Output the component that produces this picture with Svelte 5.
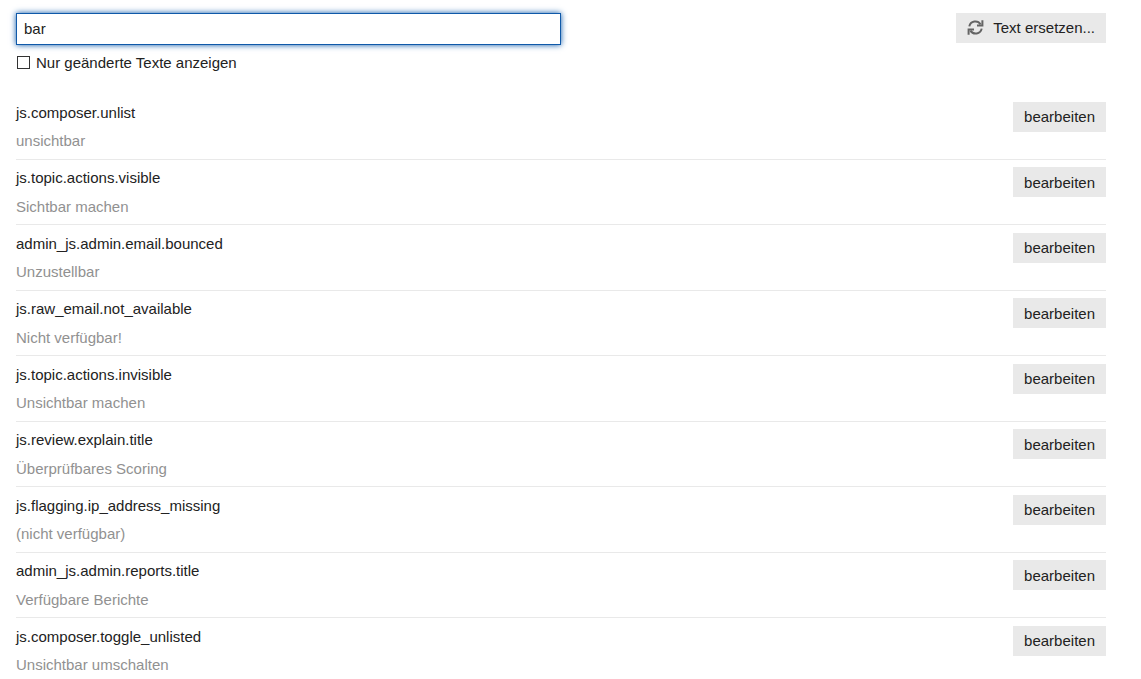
<script lang="ts">
	interface SiteText {
		id: string;
		value: string;
	}

	const texts: SiteText[] = [
		{ id: 'js.composer.unlist', value: 'unsichtbar' },
		{ id: 'js.topic.actions.visible', value: 'Sichtbar machen' },
		{ id: 'admin_js.admin.email.bounced', value: 'Unzustellbar' },
		{ id: 'js.raw_email.not_available', value: 'Nicht verfügbar!' },
		{ id: 'js.topic.actions.invisible', value: 'Unsichtbar machen' },
		{ id: 'js.review.explain.title', value: 'Überprüfbares Scoring' },
		{ id: 'js.flagging.ip_address_missing', value: '(nicht verfügbar)' },
		{ id: 'admin_js.admin.reports.title', value: 'Verfügbare Berichte' },
		{ id: 'js.composer.toggle_unlisted', value: 'Unsichtbar umschalten' }
	];

	let query = $state('bar');
	let onlyOverridden = $state(false);
</script>

<main>
	<div class="search">
		<input class="query" type="text" aria-label="Suche" bind:value={query} />
		<button class="btn" type="button">
			<svg viewBox="0 0 16 16" width="16" height="16" aria-hidden="true">
				<path d="M2.3 7.4A6.2 6.2 0 0 1 13.6 5.4M14.7 9.6A6.2 6.2 0 0 1 3.4 11.6" />
				<path d="M15.4 1.2V6.5H10M1.6 15.8V10.5H7" />
			</svg>
			Text ersetzen...
		</button>
	</div>

	<label class="filter">
		<input type="checkbox" bind:checked={onlyOverridden} />
		Nur geänderte Texte anzeigen
	</label>

	<ul>
		{#each texts as text (text.id)}
			<li>
				<div class="text">
					<h3>{text.id}</h3>
					<p>{text.value}</p>
				</div>
				<button class="btn" type="button">bearbeiten</button>
			</li>
		{/each}
	</ul>
</main>

<style>
	:global(body) {
		background: #fff;
		overflow: hidden;
	}

	main {
		padding: 13px 35px 0 16px;
		font-family: Arial, 'Liberation Sans', sans-serif;
		font-size: 15px;
		line-height: 21px;
		color: #222;
	}

	.search {
		display: flex;
		align-items: flex-start;
		justify-content: space-between;
	}

	.query {
		box-sizing: border-box;
		width: 50%;
		height: 32px;
		padding: 0 7px 2px;
		border: 1px solid #0f59a9;
		border-radius: 0;
		outline: none;
		background: #fff;
		box-shadow: 0 0 6px #0f59a9;
		font: inherit;
		color: inherit;
	}

	.btn {
		display: inline-flex;
		flex: none;
		align-items: center;
		height: 30px;
		padding: 0 11px 2px;
		border: none;
		background: #e9e9e9;
		font: inherit;
		color: inherit;
		cursor: pointer;
	}

	.btn svg {
		margin-right: 10px;
		overflow: visible;
		fill: none;
		stroke: #646464;
		stroke-width: 2;
	}

	.filter {
		display: flex;
		align-items: center;
		gap: 6px;
		width: fit-content;
		margin-top: 7px;
	}

	.filter input {
		box-sizing: border-box;
		width: 13px;
		height: 13px;
		margin: 0 0 0 1px;
		border: 1px solid #333;
		background: #fff;
		appearance: none;
	}

	.filter input:checked {
		box-shadow: inset 0 0 0 2px #fff;
		background: #333;
	}

	ul {
		margin: 21px 0 0;
		padding: 0;
		list-style: none;
	}

	li {
		display: flex;
		align-items: flex-start;
		justify-content: space-between;
		padding: 8px 0;
		border-bottom: 1px solid #e9e9e9;
	}

	.text {
		display: grid;
		gap: 7px;
	}

	li:nth-child(even) {
		padding: 7px 0;
	}

	li:nth-child(even) .text {
		gap: 8px;
	}

	li:nth-child(even) .btn {
		padding-bottom: 0;
	}

	h3,
	p {
		margin: 0;
		font-size: 15px;
		font-weight: normal;
	}

	p {
		color: #919191;
	}
</style>
